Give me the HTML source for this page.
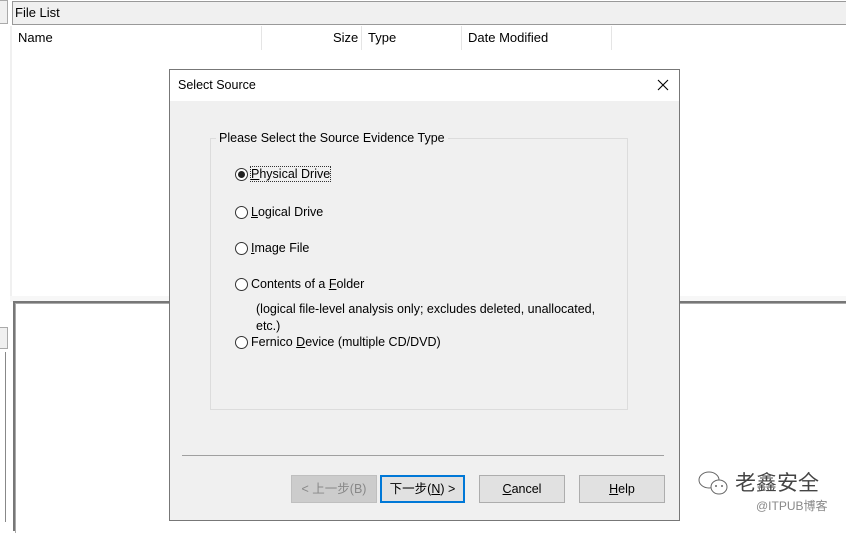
<!DOCTYPE html>
<html><head><meta charset="utf-8"><style>
*{box-sizing:border-box;margin:0;padding:0}
body{width:846px;height:520px;overflow:hidden;background:#fff;position:relative;font-family:"Liberation Sans","Noto Sans CJK SC",sans-serif;font-size:12.5px;color:#000}
.a{position:absolute}
u{text-decoration:underline}
.btn{position:absolute;top:475px;height:28px;background:#e1e1e1;border:1px solid #adadad;text-align:center;line-height:26px;font-size:12.5px}
.rad{position:absolute;left:235px;width:13px;height:13px;border:1px solid #333;border-radius:50%;background:#fff}
.lbl{position:absolute;left:251px;font-size:12.5px}
</style></head><body>
<div class="a" style="left:0;top:0;width:8px;height:24px;background:#f0f0f0;border:1px solid #aaa;border-left:none"></div>
<div class="a" style="left:12px;top:1px;width:840px;height:24px;background:#f0f0f0;border:1px solid #999;padding:3px 2px;font-size:13px">File List</div>
<div class="a" style="left:10px;top:26px;width:2px;height:274px;background:#f0f0f0"></div>
<div class="a" style="left:18px;top:30px;font-size:13px">Name</div>
<div class="a" style="left:261px;top:26px;width:1px;height:24px;background:#e5e5e5"></div>
<div class="a" style="left:333px;top:30px;font-size:13px">Size</div>
<div class="a" style="left:361px;top:26px;width:1px;height:24px;background:#e5e5e5"></div>
<div class="a" style="left:368px;top:30px;font-size:13px">Type</div>
<div class="a" style="left:461px;top:26px;width:1px;height:24px;background:#e5e5e5"></div>
<div class="a" style="left:468px;top:30px;font-size:13px">Date Modified</div>
<div class="a" style="left:611px;top:26px;width:1px;height:24px;background:#e5e5e5"></div>
<div class="a" style="left:10px;top:296px;width:836px;height:6px;background:#f7f7f7"></div>
<div class="a" style="left:13px;top:301px;width:840px;height:230px;border-top:2px solid #777;border-left:2px solid #777"></div>
<div class="a" style="left:15px;top:303px;width:840px;height:230px;border-top:1px solid #aaa;border-left:1px solid #aaa"></div>
<div class="a" style="left:0;top:327px;width:8px;height:22px;background:#f0f0f0;border:1px solid #aaa;border-left:none"></div>
<div class="a" style="left:0;top:352px;width:6px;height:170px;border-right:1px solid #888"></div>

<div class="a" style="left:169px;top:69px;width:511px;height:452px;background:#f0f0f0;border:1px solid #777">
<div class="a" style="left:0;top:0;width:509px;height:31px;background:#fff;padding:8px 8px;font-size:12.5px">Select Source</div>
<svg class="a" style="left:487px;top:9px" width="12" height="12"><path d="M1 1L11 11M11 1L1 11" stroke="#000" stroke-width="1.1"/></svg>
</div>
<div class="a" style="left:210px;top:138px;width:418px;height:272px;border:1px solid #dcdcdc"></div>
<div class="a" style="left:216px;top:131px;background:#f0f0f0;padding:0 3px">Please Select the Source Evidence Type</div>
<div class="rad" style="top:168px"><div class="a" style="left:2px;top:2px;width:7px;height:7px;border-radius:50%;background:#222"></div></div>
<div class="lbl" style="top:167px;outline:1px dotted #333"><u>P</u>hysical Drive</div>
<div class="rad" style="top:206px"></div><div class="lbl" style="top:205px"><u>L</u>ogical Drive</div>
<div class="rad" style="top:242px"></div><div class="lbl" style="top:241px"><u>I</u>mage File</div>
<div class="rad" style="top:278px"></div><div class="lbl" style="top:277px">Contents of a <u>F</u>older</div>
<div class="lbl" style="top:301px;left:256px;width:360px;line-height:17px">(logical file-level analysis only; excludes deleted, unallocated, etc.)</div>
<div class="rad" style="top:336px"></div><div class="lbl" style="top:335px">Fernico <u>D</u>evice (multiple CD/DVD)</div>
<div class="a" style="left:182px;top:455px;width:482px;height:1px;background:#a0a0a0"></div>
<div class="btn" style="left:291px;width:86px;background:#ccc;border-color:#bfbfbf;color:#888">&lt; 上一步(B)</div>
<div class="btn" style="left:380px;width:85px;border:2px solid #0078d7;line-height:24px">下一步(<u>N</u>) &gt;</div>
<div class="btn" style="left:479px;width:86px"><u>C</u>ancel</div>
<div class="btn" style="left:579px;width:86px"><u>H</u>elp</div>
<svg class="a" style="left:696px;top:468px" width="36" height="30"><ellipse cx="13" cy="12" rx="10" ry="8" fill="none" stroke="#666" stroke-width="1"/><ellipse cx="23" cy="19" rx="8" ry="7" fill="#fff" stroke="#666" stroke-width="1"/><circle cx="20" cy="18" r="1" fill="#666"/><circle cx="26" cy="18" r="1" fill="#666"/></svg>
<div class="a" style="left:735px;top:467px;font-size:21px;color:#444;font-family:'Noto Sans CJK SC',sans-serif">老鑫安全</div>
<div class="a" style="left:756px;top:497px;font-size:12px;color:#888">@ITPUB博客</div>
</body></html>
